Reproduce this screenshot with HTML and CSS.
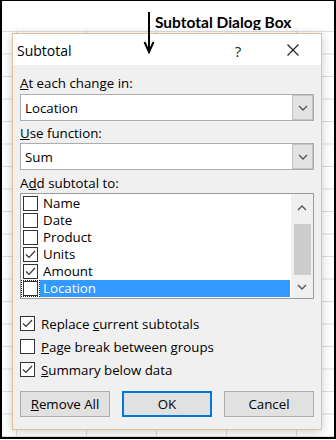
FILE: index.html
```html
<!DOCTYPE html>
<html>
<head>
<meta charset="utf-8">
<link rel="stylesheet" href="styles.css">
</head>
<body>
<div class="frame">
  <div class="annot">Subtotal Dialog Box</div>
  <svg class="arrow" width="12" height="42" viewBox="0 0 12 42">
    <line x1="6" y1="0" x2="6" y2="39" stroke="#000" stroke-width="2"/>
    <polyline points="1.5,30 6,40 10.5,30" fill="none" stroke="#000" stroke-width="2"/>
  </svg>
  <div class="sheet">
    <div class="dialog">
      <div class="titlebar">
        <span class="title">Subtotal</span>
        <span class="help">?</span>
        <svg class="close" width="12" height="12" viewBox="0 0 12 12">
          <path d="M0.5 0.5 L11.5 11.5 M11.5 0.5 L0.5 11.5" stroke="#222" stroke-width="1.2" fill="none"/>
        </svg>
      </div>
      <div class="body">
        <div class="label"><u>A</u>t each change in:</div>
        <div class="combo c1">
          <span class="ctext">Location</span>
          <span class="dd"><svg width="10" height="6" viewBox="0 0 10 6"><polyline points="1,1 5,5 9,1" fill="none" stroke="#555" stroke-width="1.3"/></svg></span>
        </div>
        <div class="label l2"><u>U</u>se function:</div>
        <div class="combo c2">
          <span class="ctext">Sum</span>
          <span class="dd"><svg width="10" height="6" viewBox="0 0 10 6"><polyline points="1,1 5,5 9,1" fill="none" stroke="#555" stroke-width="1.3"/></svg></span>
        </div>
        <div class="label l3">A<u>d</u>d subtotal to:</div>
        <div class="listbox">
          <div class="items">
            <div class="item"><span class="cbwrap"><span class="cb"></span></span><span class="itext">Name</span></div>
            <div class="item"><span class="cbwrap"><span class="cb"></span></span><span class="itext">Date</span></div>
            <div class="item"><span class="cbwrap"><span class="cb"></span></span><span class="itext">Product</span></div>
            <div class="item"><span class="cbwrap"><span class="cb"><svg width="13" height="13" viewBox="0 0 13 13"><polyline points="2,6.5 5,9.5 11,3" fill="none" stroke="#333" stroke-width="1.2"/></svg></span></span><span class="itext">Units</span></div>
            <div class="item"><span class="cbwrap"><span class="cb"><svg width="13" height="13" viewBox="0 0 13 13"><polyline points="2,6.5 5,9.5 11,3" fill="none" stroke="#333" stroke-width="1.2"/></svg></span></span><span class="itext">Amount</span></div>
            <div class="item sel"><span class="cbwrap focus"><span class="cb"></span></span><span class="itext">Location</span></div>
          </div>
          <div class="scrollbar">
            <span class="sbtn up"><svg width="10" height="6" viewBox="0 0 10 6"><polyline points="1,5 5,1 9,5" fill="none" stroke="#555" stroke-width="1.4"/></svg></span>
            <span class="thumb"></span>
            <span class="sbtn down"><svg width="10" height="6" viewBox="0 0 10 6"><polyline points="1,1 5,5 9,1" fill="none" stroke="#555" stroke-width="1.4"/></svg></span>
          </div>
        </div>
        <div class="opts">
          <div class="opt"><span class="cb"><svg width="13" height="13" viewBox="0 0 13 13"><polyline points="2,6.5 5,9.5 11,3" fill="none" stroke="#333" stroke-width="1.2"/></svg></span><span>Replace <u>c</u>urrent subtotals</span></div>
          <div class="opt"><span class="cb"></span><span><u>P</u>age break between groups</span></div>
          <div class="opt"><span class="cb"><svg width="13" height="13" viewBox="0 0 13 13"><polyline points="2,6.5 5,9.5 11,3" fill="none" stroke="#333" stroke-width="1.2"/></svg></span><span><u>S</u>ummary below data</span></div>
        </div>
        <div class="buttons">
          <span class="btn"><u>R</u>emove All</span>
          <span class="btn ok">OK</span>
          <span class="btn">Cancel</span>
        </div>
      </div>
    </div>
  </div>
</div>
</body>
</html>
```

FILE: styles.css
```css
* { box-sizing: border-box; }
html, body { margin: 0; padding: 0; background: #fff; }
body {
  width: 336px;
  height: 440px;
  overflow: hidden;
  font-family: "Open Sans", "Noto Sans", sans-serif;
  color: #000;
}
.frame {
  position: relative;
  width: 336px;
  height: 439px;
  border: 2px solid #000;
  border-top-width: 1px;
  display: flex;
  flex-direction: column;
  background: #fff;
}
.annot {
  height: 29px;
  padding: 13px 0 0 153px;
  font: bold 15.5px/16px Lato, "Liberation Sans", sans-serif;
  white-space: nowrap;
}
.arrow {
  position: absolute;
  left: 141px;
  top: 11px;
  z-index: 2;
}
.sheet {
  flex: 1;
  padding: 3px 0 0 10px;
  background-color: #fff;
  background-image:
    linear-gradient(to right, #dedede 1px, transparent 1px),
    linear-gradient(to bottom, #dedede 1px, transparent 1px);
  background-size: 70px 22.5px, 70px 22.5px;
  background-position: 14px 1px, 14px 1px;
}
.dialog {
  width: 310px;
  height: 397px;
  border: 1px solid #e0c18f;
  background: #f0f0f0;
  box-shadow: 0 2px 10px rgba(0, 0, 0, 0.2);
  display: flex;
  flex-direction: column;
}
.titlebar {
  height: 31px;
  background: #fff;
  display: flex;
  align-items: center;
  padding-left: 4px;
}
.title {
  flex: 1;
  font-size: 14px;
  padding-top: 2px;
}
.help {
  width: 20px;
  text-align: center;
  font-size: 15px;
  padding-top: 2px;
  margin-right: 39px;
  color: #222;
}
.close { margin-right: 22px; }
.body {
  flex: 1;
  padding: 9px 7px 0 7px;
  font-size: 13.3px;
}
.label {
  height: 18px;
  line-height: 18px;
  white-space: nowrap;
}
.l2 { margin-top: 3px; }
.l3 { margin-top: 4px; }
.combo {
  height: 27px;
  border: 1px solid #acacac;
  background: #fff;
  display: flex;
  align-items: stretch;
}
.c1 { margin-top: 2px; }
.c2 { margin-top: 1px; }
.ctext {
  flex: 1;
  padding-left: 4px;
  display: flex;
  align-items: center;
}
.dd {
  width: 21px;
  background: #e3e3e3;
  border: 1px solid #c4c4c4;
  display: flex;
  align-items: center;
  justify-content: center;
}
.listbox {
  margin-top: 1px;
  height: 106px;
  border: 1px solid #9c9c9c;
  background: #fff;
  display: flex;
}
.items {
  flex: 1;
  padding-top: 1px;
  padding-right: 1px;
}
.item {
  height: 17px;
  display: flex;
  align-items: center;
}
.cbwrap {
  width: 19px;
  height: 17px;
  padding-left: 2px;
  display: flex;
  align-items: center;
}
.cb {
  width: 15px;
  height: 15px;
  border: 1px solid #333;
  background: #fff;
  display: flex;
  align-items: center;
  justify-content: center;
  flex: none;
}
.itext {
  padding-left: 3px;
  line-height: 17px;
}
.item.sel .itext {
  flex: 1;
  height: 17px;
  background: #3399ff;
  color: #fff;
}
.focus {
  outline: 1px dotted #222;
  outline-offset: -1px;
}
.scrollbar {
  width: 22px;
  background: #f0f0f0;
  display: flex;
  flex-direction: column;
  align-items: center;
}
.sbtn {
  display: flex;
  align-items: center;
  justify-content: center;
  width: 100%;
}
.sbtn.up { height: 27px; }
.thumb {
  margin-top: 3px;
  width: 17px;
  height: 51px;
  background: #cdcdcd;
}
.sbtn.down { flex: 1; }
.opts { margin-top: 13px; }
.opt {
  height: 23px;
  display: flex;
  align-items: center;
  gap: 6px;
  white-space: nowrap;
}
.buttons {
  margin-top: 10px;
  display: flex;
  justify-content: space-between;
}
.btn {
  width: 90px;
  height: 26px;
  background: #e1e1e1;
  border: 1px solid #adadad;
  display: flex;
  align-items: center;
  justify-content: center;
}
.btn.ok {
  border: 2px solid #0078d7;
}
```
